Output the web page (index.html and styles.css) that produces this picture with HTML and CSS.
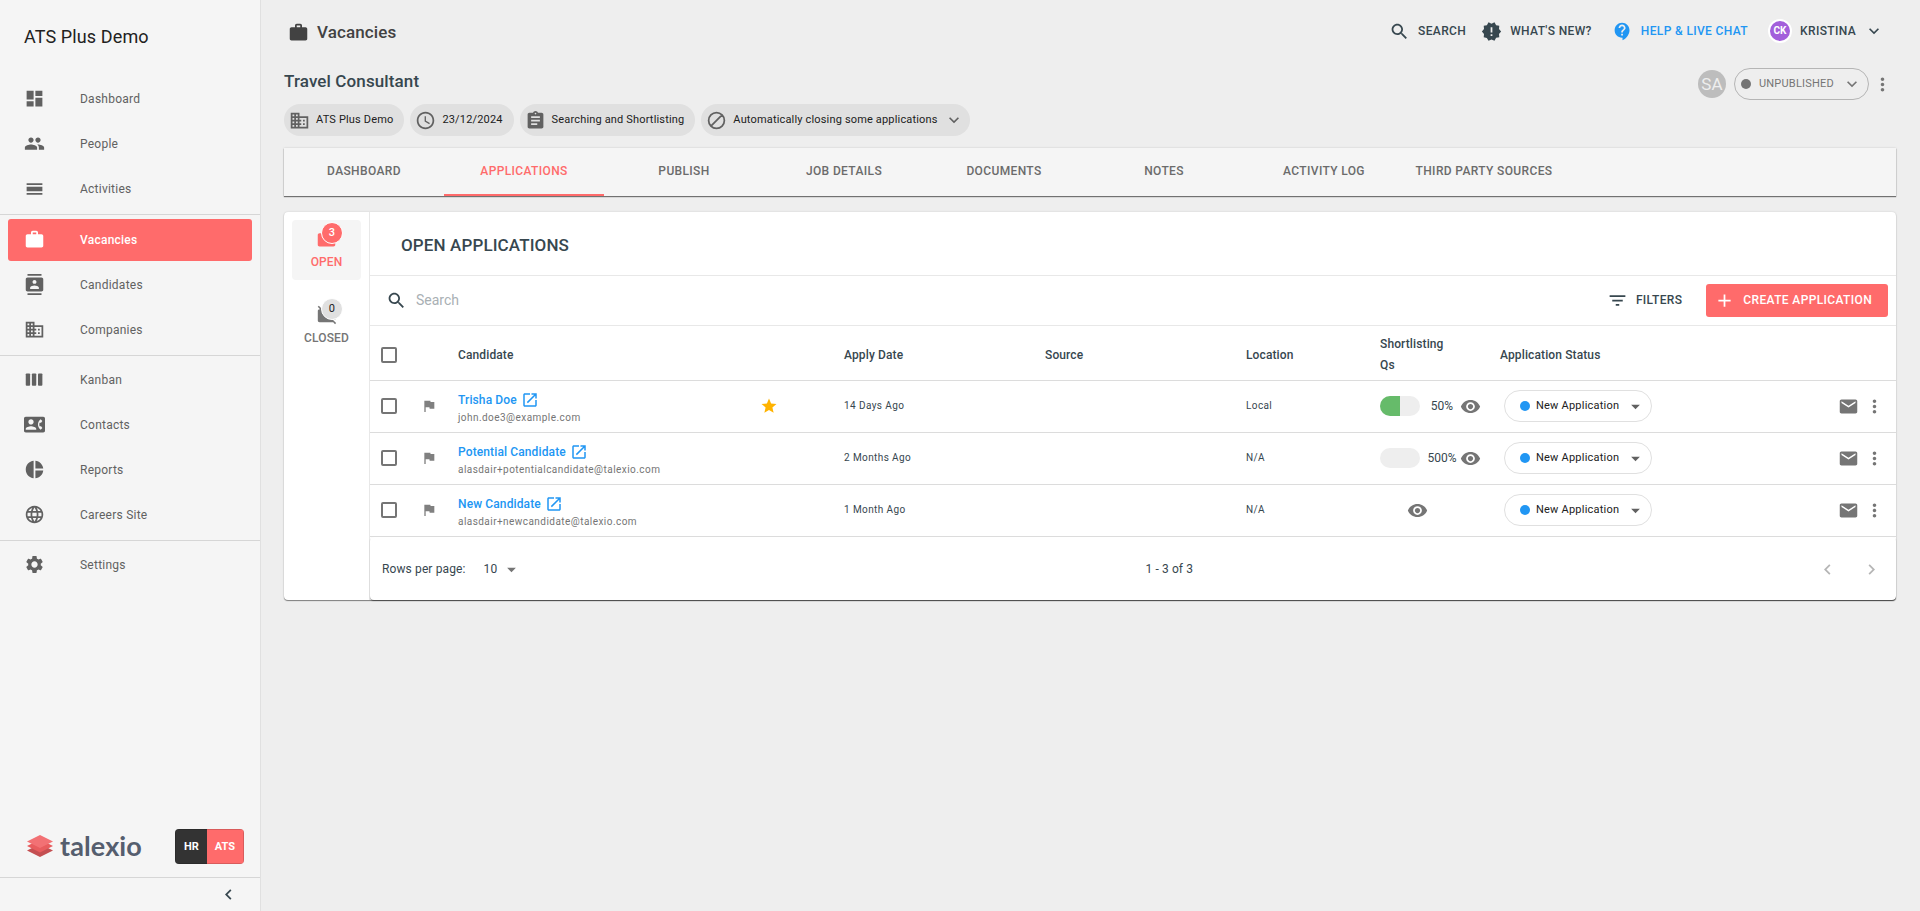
FILE: index.html
```html
<!DOCTYPE html>
<html lang="en">
<head>
<meta charset="utf-8">
<title>ATS Plus Demo</title>
<link rel="stylesheet" href="styles.css">
</head>
<body>
<svg class="sprite" aria-hidden="true">
  <symbol id="i-dashboard" viewBox="0 0 24 24"><path d="M3 13h8V3H3v10zm0 8h8v-6H3v6zm10 0h8V11h-8v10zm0-18v6h8V3h-8z"/></symbol>
  <symbol id="i-people" viewBox="0 0 24 24"><path d="M16 11c1.66 0 2.99-1.34 2.99-3S17.66 5 16 5c-1.66 0-3 1.34-3 3s1.34 3 3 3zm-8 0c1.66 0 2.99-1.34 2.99-3S9.66 5 8 5C6.34 5 5 6.34 5 8s1.34 3 3 3zm0 2c-2.33 0-7 1.17-7 3.5V19h14v-2.5c0-2.33-4.67-3.5-7-3.5zm8 0c-.29 0-.62.02-.97.05 1.16.84 1.97 1.97 1.97 3.45V19h6v-2.5c0-2.33-4.67-3.5-7-3.5z"/></symbol>
  <symbol id="i-day" viewBox="0 0 24 24"><path d="M3 17h18v2H3zm0-7h18v5H3zm0-4h18v2H3z"/></symbol>
  <symbol id="i-work" viewBox="0 0 24 24"><path d="M20 6h-4V4c0-1.11-.89-2-2-2h-4c-1.11 0-2 .89-2 2v2H4c-1.11 0-1.99.89-1.99 2L2 19c0 1.11.89 2 2 2h16c1.11 0 2-.89 2-2V8c0-1.11-.89-2-2-2zm-6 0h-4V4h4v2z"/></symbol>
  <symbol id="i-workoff" viewBox="0 0 24 24"><path d="M23 21.74l-1.46-1.46L7.21 5.95 3.25 1.99 1.99 3.25l2.7 2.7h-.64c-1.11 0-1.99.89-1.99 2l-.01 11c0 1.11.89 2 2 2h15.64L21.74 23 23 21.74zM22 7.95c.05-1.11-.84-2-1.95-1.95h-4V3.95c0-1.11-.89-2-2-1.95h-4c-1.11-.05-2 .84-2 1.95v.32l13.95 14V7.95zM14.05 6H10V3.95h4.05V6z"/></symbol>
  <symbol id="i-contacts" viewBox="0 0 24 24"><path d="M20 0H4v2h16V0zM4 24h16v-2H4v2zM20 4H4c-1.1 0-2 .9-2 2v12c0 1.1.9 2 2 2h16c1.1 0 2-.9 2-2V6c0-1.1-.9-2-2-2zm-8 2.75c1.24 0 2.25 1.01 2.25 2.25s-1.01 2.25-2.25 2.25S9.75 10.24 9.75 9 10.76 6.75 12 6.75zM17 17H7v-1.5c0-1.67 3.33-2.5 5-2.5s5 .83 5 2.5V17z"/></symbol>
  <symbol id="i-business" viewBox="0 0 24 24"><path d="M12 7V3H2v18h20V7H12zM6 19H4v-2h2v2zm0-4H4v-2h2v2zm0-4H4V9h2v2zm0-4H4V5h2v2zm4 12H8v-2h2v2zm0-4H8v-2h2v2zm0-4H8V9h2v2zm0-4H8V5h2v2zm10 12h-8v-2h2v-2h-2v-2h2v-2h-2V9h8v10zm-2-8h-2v2h2v-2zm0 4h-2v2h2v-2z"/></symbol>
  <symbol id="i-kanban" viewBox="0 0 24 24"><rect x="2" y="5" width="5" height="14" rx="1"/><rect x="9" y="5" width="5" height="14" rx="1"/><rect x="16" y="5" width="5" height="14" rx="1"/></symbol>
  <symbol id="i-phone" viewBox="0 0 24 24"><path d="M22 3H2C.9 3 0 3.9 0 5v14c0 1.1.9 2 2 2h20c1.1 0 1.99-.9 1.99-2L24 5c0-1.1-.9-2-2-2zM8 6c1.66 0 3 1.34 3 3s-1.34 3-3 3-3-1.34-3-3 1.34-3 3-3zm6 12H2v-1c0-2 4-3.1 6-3.1s6 1.1 6 3.1v1zm3.85-4h1.64L21 16l-1.99 1.99c-1.31-.98-2.28-2.38-2.73-3.99-.18-.64-.28-1.31-.28-2s.1-1.36.28-2c.45-1.62 1.42-3.01 2.73-3.99L21 8l-1.51 2h-1.64c-.22.63-.35 1.3-.35 2s.13 1.37.35 2z"/></symbol>
  <symbol id="i-pie" viewBox="0 0 24 24"><path d="M11 2v20c-5.07-.5-9-4.79-9-10s3.93-9.5 9-10zm2.03 0v8.99H22c-.47-4.74-4.24-8.52-8.97-8.99zm0 11.01V22c4.74-.47 8.5-4.25 8.97-8.99h-8.97z"/></symbol>
  <symbol id="i-globe" viewBox="0 0 24 24"><path d="M11.99 2C6.47 2 2 6.48 2 12s4.47 10 9.99 10C17.52 22 22 17.52 22 12S17.52 2 11.99 2zm6.93 6h-2.95c-.32-1.25-.78-2.45-1.38-3.56 1.84.63 3.37 1.91 4.33 3.56zM12 4.04c.83 1.2 1.48 2.53 1.91 3.96h-3.82c.43-1.43 1.08-2.76 1.91-3.96zM4.26 14C4.1 13.36 4 12.69 4 12s.1-1.36.26-2h3.38c-.08.66-.14 1.32-.14 2 0 .68.06 1.34.14 2H4.26zm.82 2h2.95c.32 1.25.78 2.45 1.38 3.56-1.84-.63-3.37-1.9-4.33-3.56zm2.95-8H5.08c.96-1.66 2.49-2.93 4.33-3.56C8.81 5.55 8.35 6.75 8.03 8zM12 19.96c-.83-1.2-1.48-2.53-1.91-3.96h3.82c-.43 1.43-1.08 2.76-1.91 3.96zM14.34 14H9.66c-.09-.66-.16-1.32-.16-2 0-.68.07-1.35.16-2h4.68c.09.65.16 1.32.16 2 0 .68-.07 1.34-.16 2zm.25 5.56c.6-1.11 1.06-2.31 1.38-3.56h2.95c-.96 1.65-2.49 2.93-4.33 3.56zM16.36 14c.08-.66.14-1.32.14-2 0-.68-.06-1.34-.14-2h3.38c.16.64.26 1.31.26 2s-.1 1.36-.26 2h-3.38z"/></symbol>
  <symbol id="i-settings" viewBox="0 0 24 24"><path d="M19.14 12.94c.04-.3.06-.61.06-.94 0-.32-.02-.64-.07-.94l2.03-1.58c.18-.14.23-.41.12-.61l-1.92-3.32c-.12-.22-.37-.29-.59-.22l-2.39.96c-.5-.38-1.03-.7-1.62-.94l-.36-2.54c-.04-.24-.24-.41-.48-.41h-3.84c-.24 0-.43.17-.47.41l-.36 2.54c-.59.24-1.13.57-1.62.94l-2.39-.96c-.22-.08-.47 0-.59.22L2.74 8.87c-.12.21-.08.47.12.61l2.03 1.58c-.05.3-.09.63-.09.94s.02.64.07.94l-2.03 1.58c-.18.14-.23.41-.12.61l1.92 3.32c.12.22.37.29.59.22l2.39-.96c.5.38 1.03.7 1.62.94l.36 2.54c.05.24.24.41.48.41h3.84c.24 0 .44-.17.47-.41l.36-2.54c.59-.24 1.13-.56 1.62-.94l2.39.96c.22.08.47 0 .59-.22l1.92-3.32c.12-.22.07-.47-.12-.61l-2.01-1.58zM12 15.6c-1.98 0-3.6-1.62-3.6-3.6s1.62-3.6 3.6-3.6 3.6 1.62 3.6 3.6-1.62 3.6-3.6 3.6z"/></symbol>
  <symbol id="i-search" viewBox="0 0 24 24"><path d="M15.5 14h-.79l-.28-.27C15.41 12.59 16 11.11 16 9.5 16 5.91 13.09 3 9.5 3S3 5.91 3 9.5 5.91 16 9.5 16c1.61 0 3.09-.59 4.23-1.57l.27.28v.79l5 4.99L20.49 19l-4.99-5zm-6 0C7.01 14 5 11.99 5 9.5S7.01 5 9.5 5 14 7.01 14 9.5 11.99 14 9.5 14z"/></symbol>
  <symbol id="i-new" viewBox="0 0 24 24"><path d="M23 12l-2.44-2.78.34-3.68-3.61-.82-1.89-3.18L12 3 8.6 1.54 6.71 4.72l-3.61.81.34 3.68L1 12l2.44 2.78-.34 3.69 3.61.82 1.89 3.18L12 21l3.4 1.46 1.89-3.18 3.61-.82-.34-3.68L23 12zm-10 5h-2v-2h2v2zm0-4h-2V7h2v6z"/></symbol>
  <symbol id="i-help" viewBox="0 0 24 24"><path d="M11.5 2C6.81 2 3 5.81 3 10.5S6.81 19 11.5 19h.5v3c4.86-2.34 8-7 8-11.5C20 5.81 16.19 2 11.5 2zm1 14.5h-2v-2h2v2zm0-3.5h-2c0-3.25 3-3 3-5 0-1.1-.9-2-2-2s-2 .9-2 2h-2c0-2.21 1.79-4 4-4s4 1.79 4 4c0 2.5-3 2.75-3 5z"/></symbol>
  <symbol id="i-down" viewBox="0 0 24 24"><path d="M16.59 8.59L12 13.17 7.41 8.59 6 10l6 6 6-6z"/></symbol>
  <symbol id="i-left" viewBox="0 0 24 24"><path d="M15.41 7.41L14 6l-6 6 6 6 1.41-1.41L10.83 12z"/></symbol>
  <symbol id="i-right" viewBox="0 0 24 24"><path d="M10 6L8.59 7.41 13.17 12l-4.58 4.59L10 18l6-6z"/></symbol>
  <symbol id="i-more" viewBox="0 0 24 24"><path d="M12 8c1.1 0 2-.9 2-2s-.9-2-2-2-2 .9-2 2 .9 2 2 2zm0 2c-1.1 0-2 .9-2 2s.9 2 2 2 2-.9 2-2-.9-2-2-2zm0 6c-1.1 0-2 .9-2 2s.9 2 2 2 2-.9 2-2-.9-2-2-2z"/></symbol>
  <symbol id="i-clock" viewBox="0 0 24 24"><path d="M11.99 2C6.47 2 2 6.48 2 12s4.47 10 9.99 10C17.52 22 22 17.52 22 12S17.52 2 11.99 2zM12 20c-4.42 0-8-3.58-8-8s3.58-8 8-8 8 3.58 8 8-3.58 8-8 8zm.5-13H11v6l5.25 3.15.75-1.23-4.5-2.67z"/></symbol>
  <symbol id="i-assignment" viewBox="0 0 24 24"><path d="M19 3h-4.18C14.4 1.84 13.3 1 12 1c-1.3 0-2.4.84-2.82 2H5c-1.1 0-2 .9-2 2v14c0 1.1.9 2 2 2h14c1.1 0 2-.9 2-2V5c0-1.1-.9-2-2-2zm-7 0c.55 0 1 .45 1 1s-.45 1-1 1-1-.45-1-1 .45-1 1-1zm2 14H7v-2h7v2zm3-4H7v-2h10v2zm0-4H7V7h10v2z"/></symbol>
  <symbol id="i-block" viewBox="0 0 24 24"><path d="M5.6 18.4L18.4 5.6M21 12a9 9 0 1 1-18 0 9 9 0 0 1 18 0z" fill="none" stroke="currentColor" stroke-width="2"/></symbol>
  <symbol id="i-flag" viewBox="0 0 24 24"><path d="M14.4 6L14 4H5v17h2v-7h5.6l.4 2h7V6z"/></symbol>
  <symbol id="i-open" viewBox="0 0 24 24"><path d="M19 19H5V5h7V3H5c-1.11 0-2 .9-2 2v14c0 1.1.89 2 2 2h14c1.1 0 2-.9 2-2v-7h-2v7zM14 3v2h3.59l-9.83 9.83 1.41 1.41L19 6.41V10h2V3h-7z"/></symbol>
  <symbol id="i-star" viewBox="0 0 24 24"><path d="M12 17.27L18.18 21l-1.64-7.03L22 9.24l-7.19-.61L12 2 9.19 8.63 2 9.24l5.46 4.73L5.82 21z"/></symbol>
  <symbol id="i-eye" viewBox="0 0 24 24"><path d="M12 4.5C7 4.5 2.73 7.61 1 12c1.73 4.39 6 7.5 11 7.5s9.27-3.11 11-7.5c-1.73-4.39-6-7.5-11-7.5zM12 17c-2.76 0-5-2.24-5-5s2.24-5 5-5 5 2.24 5 5-2.24 5-5 5zm0-8c-1.66 0-3 1.34-3 3s1.34 3 3 3 3-1.34 3-3-1.34-3-3-3z"/></symbol>
  <symbol id="i-mail" viewBox="0 0 24 24"><path d="M20 4H4c-1.1 0-1.99.9-1.99 2L2 18c0 1.1.9 2 2 2h16c1.1 0 2-.9 2-2V6c0-1.1-.9-2-2-2zm0 4l-8 5-8-5V6l8 5 8-5v2z"/></symbol>
  <symbol id="i-filter" viewBox="0 0 24 24"><path d="M10 18h4v-2h-4v2zM3 6v2h18V6H3zm3 7h12v-2H6v2z"/></symbol>
  <symbol id="i-add" viewBox="0 0 24 24"><path d="M19 13h-6v6h-2v-6H5v-2h6V5h2v6h6v2z"/></symbol>
  <symbol id="i-caret" viewBox="0 0 24 24"><path d="M7 10l5 5 5-5z"/></symbol>
</svg>

<div class="app">
  <aside class="sidebar">
    <div class="brand">ATS Plus Demo</div>
    <nav class="nav" aria-label="Main">
      <a class="nav-item" href="#"><svg class="icon"><use href="#i-dashboard"/></svg>Dashboard</a>
      <a class="nav-item" href="#"><svg class="icon"><use href="#i-people"/></svg>People</a>
      <a class="nav-item" href="#"><svg class="icon"><use href="#i-day"/></svg>Activities</a>
      <hr class="nav-rule">
      <a class="nav-item active" href="#"><svg class="icon"><use href="#i-work"/></svg>Vacancies</a>
      <a class="nav-item" href="#"><svg class="icon"><use href="#i-contacts"/></svg>Candidates</a>
      <a class="nav-item" href="#"><svg class="icon"><use href="#i-business"/></svg>Companies</a>
      <hr class="nav-rule">
      <a class="nav-item" href="#"><svg class="icon"><use href="#i-kanban"/></svg>Kanban</a>
      <a class="nav-item" href="#"><svg class="icon"><use href="#i-phone"/></svg>Contacts</a>
      <a class="nav-item" href="#"><svg class="icon"><use href="#i-pie"/></svg>Reports</a>
      <a class="nav-item" href="#"><svg class="icon"><use href="#i-globe"/></svg>Careers Site</a>
      <hr class="nav-rule">
      <a class="nav-item" href="#"><svg class="icon"><use href="#i-settings"/></svg>Settings</a>
    </nav>
    <div class="product">
      <div class="logo">
        <svg class="logo-mark" viewBox="0 0 26 22"><path d="M0 15.500l13-6.500 13 6.500L13 22z" fill="#c44f51"/><path d="M0 11l13-6.500L26 11l-13 6.500z" fill="#e85c5e"/><path d="M0 6.500L13 0l13 6.500L13 13z" fill="#f27174"/></svg>
        <span class="logo-text">talexio</span>
      </div>
      <div class="switch">
        <button class="switch-btn dark" type="button">HR</button><button class="switch-btn red" type="button">ATS</button>
      </div>
    </div>
    <div class="collapse"><button class="icon-btn ink" type="button" aria-label="Collapse menu"><svg class="icon"><use href="#i-left"/></svg></button></div>
  </aside>

  <main class="main">
    <header class="topbar">
      <h1 class="page-name"><svg class="icon"><use href="#i-work"/></svg>Vacancies</h1>
      <div class="top-actions">
        <div class="top-group">
          <button class="top-btn" type="button"><svg class="icon"><use href="#i-search"/></svg>SEARCH</button>
          <button class="top-btn" type="button"><svg class="icon"><use href="#i-new"/></svg>WHAT'S NEW?</button>
        </div>
        <button class="top-btn help" type="button"><svg class="icon"><use href="#i-help"/></svg>HELP &amp; LIVE CHAT</button>
        <button class="top-btn" type="button"><span class="avatar">CK</span>KRISTINA<svg class="icon small"><use href="#i-down"/></svg></button>
      </div>
    </header>

    <section class="vacancy">
      <div class="vacancy-info">
        <h2 class="vacancy-title">Travel Consultant</h2>
        <div class="chips">
          <span class="chip"><svg class="icon"><use href="#i-business"/></svg>ATS Plus Demo</span>
          <span class="chip"><svg class="icon"><use href="#i-clock"/></svg>23/12/2024</span>
          <span class="chip"><svg class="icon"><use href="#i-assignment"/></svg>Searching and Shortlisting</span>
          <button class="chip menu" type="button"><svg class="icon"><use href="#i-block"/></svg>Automatically closing some applications<svg class="icon small"><use href="#i-down"/></svg></button>
        </div>
      </div>
      <div class="vacancy-actions">
        <span class="owner">SA</span>
        <button class="publish" type="button"><span class="dot"></span>UNPUBLISHED<svg class="icon small"><use href="#i-down"/></svg></button>
        <button class="icon-btn" type="button" aria-label="More"><svg class="icon"><use href="#i-more"/></svg></button>
      </div>
    </section>

    <nav class="tabs" aria-label="Vacancy">
      <a class="tab" href="#">DASHBOARD</a>
      <a class="tab active" href="#">APPLICATIONS</a>
      <a class="tab" href="#">PUBLISH</a>
      <a class="tab" href="#">JOB DETAILS</a>
      <a class="tab" href="#">DOCUMENTS</a>
      <a class="tab" href="#">NOTES</a>
      <a class="tab" href="#">ACTIVITY LOG</a>
      <a class="tab" href="#">THIRD PARTY SOURCES</a>
    </nav>

    <section class="card">
      <div class="side-tabs">
        <button class="side-tab active" type="button"><span class="badged"><svg class="icon"><use href="#i-work"/></svg><span class="badge">3</span></span>OPEN</button>
        <button class="side-tab" type="button"><span class="badged"><svg class="icon"><use href="#i-workoff"/></svg><span class="badge">0</span></span>CLOSED</button>
      </div>
      <div class="panel">
        <h3 class="panel-title">OPEN APPLICATIONS</h3>
        <div class="toolbar">
          <label class="search"><svg class="icon"><use href="#i-search"/></svg><input class="search-input" type="search" placeholder="Search" aria-label="Search"></label>
          <button class="filters" type="button"><svg class="icon"><use href="#i-filter"/></svg>FILTERS</button>
          <button class="create" type="button"><svg class="icon"><use href="#i-add"/></svg>CREATE APPLICATION</button>
        </div>
        <table class="grid">
          <colgroup><col class="c-check"><col class="c-flag"><col><col class="c-star"><col class="c-wide"><col class="c-wide"><col class="c-loc"><col class="c-short"><col class="c-status"><col class="c-act"></colgroup>
          <thead>
            <tr>
              <th><input class="check" type="checkbox" aria-label="Select all"></th><th></th><th>Candidate</th><th></th><th>Apply Date</th><th>Source</th><th>Location</th><th><span class="two-line">Shortlisting Qs</span></th><th>Application Status</th><th></th>
            </tr>
          </thead>
          <tbody>
            <tr>
              <td><input class="check" type="checkbox" aria-label="Select Trisha Doe"></td>
              <td><svg class="icon flag"><use href="#i-flag"/></svg></td>
              <td class="who"><a class="name" href="#">Trisha Doe<svg class="icon"><use href="#i-open"/></svg></a><div class="email">john.doe3@example.com</div></td>
              <td><svg class="icon star"><use href="#i-star"/></svg></td>
              <td class="fine">14 Days Ago</td><td></td><td class="fine">Local</td>
              <td><div class="score"><span class="bar"><span class="fill" style="width:50%"></span></span><span class="pct">50%</span><button class="icon-btn" type="button" aria-label="View answers"><svg class="icon"><use href="#i-eye"/></svg></button></div></td>
              <td><label class="status"><span class="dot"></span><select class="status-select" aria-label="Status"><option>New Application</option></select><svg class="icon"><use href="#i-caret"/></svg></label></td>
              <td><div class="row-actions"><button class="icon-btn" type="button" aria-label="Email"><svg class="icon"><use href="#i-mail"/></svg></button><button class="icon-btn" type="button" aria-label="More"><svg class="icon"><use href="#i-more"/></svg></button></div></td>
            </tr>
            <tr>
              <td><input class="check" type="checkbox" aria-label="Select Potential Candidate"></td>
              <td><svg class="icon flag"><use href="#i-flag"/></svg></td>
              <td class="who"><a class="name" href="#">Potential Candidate<svg class="icon"><use href="#i-open"/></svg></a><div class="email">alasdair+potentialcandidate@talexio.com</div></td>
              <td></td>
              <td class="fine">2 Months Ago</td><td></td><td class="fine">N/A</td>
              <td><div class="score"><span class="bar"></span><span class="pct">500%</span><button class="icon-btn" type="button" aria-label="View answers"><svg class="icon"><use href="#i-eye"/></svg></button></div></td>
              <td><label class="status"><span class="dot"></span><select class="status-select" aria-label="Status"><option>New Application</option></select><svg class="icon"><use href="#i-caret"/></svg></label></td>
              <td><div class="row-actions"><button class="icon-btn" type="button" aria-label="Email"><svg class="icon"><use href="#i-mail"/></svg></button><button class="icon-btn" type="button" aria-label="More"><svg class="icon"><use href="#i-more"/></svg></button></div></td>
            </tr>
            <tr>
              <td><input class="check" type="checkbox" aria-label="Select New Candidate"></td>
              <td><svg class="icon flag"><use href="#i-flag"/></svg></td>
              <td class="who"><a class="name" href="#">New Candidate<svg class="icon"><use href="#i-open"/></svg></a><div class="email">alasdair+newcandidate@talexio.com</div></td>
              <td></td>
              <td class="fine">1 Month Ago</td><td></td><td class="fine">N/A</td>
              <td><div class="score lone"><button class="icon-btn" type="button" aria-label="View answers"><svg class="icon"><use href="#i-eye"/></svg></button></div></td>
              <td><label class="status"><span class="dot"></span><select class="status-select" aria-label="Status"><option>New Application</option></select><svg class="icon"><use href="#i-caret"/></svg></label></td>
              <td><div class="row-actions"><button class="icon-btn" type="button" aria-label="Email"><svg class="icon"><use href="#i-mail"/></svg></button><button class="icon-btn" type="button" aria-label="More"><svg class="icon"><use href="#i-more"/></svg></button></div></td>
            </tr>
          </tbody>
        </table>
        <footer class="pager">
          <label class="per-page">Rows per page:<span class="per-page-pick"><select class="per-page-select"><option>10</option></select><svg class="icon"><use href="#i-caret"/></svg></span></label>
          <span class="range">1 - 3 of 3</span>
          <div class="pager-nav">
            <button class="icon-btn" type="button" aria-label="Previous page" disabled><svg class="icon"><use href="#i-left"/></svg></button>
            <button class="icon-btn" type="button" aria-label="Next page" disabled><svg class="icon"><use href="#i-right"/></svg></button>
          </div>
        </footer>
      </div>
    </section>
  </main>
</div>
</body>
</html>
```
FILE: styles.css
```css
:root {
  --red: #ff6b6b;
  --ink: #37474f;
  --grey: #757575;
  --blue: #2196f3;
}
*, *::before, *::after { box-sizing: border-box; }
body {
  margin: 0;
  background: #eee;
  color: var(--ink);
  font-family: Roboto, "Liberation Sans", sans-serif;
  font-size: 12px;
  line-height: 20px;
  letter-spacing: 0.01em;
}
h1, h2, h3 { margin: 0; font-weight: 500; }
a { color: inherit; text-decoration: none; }
button, select, input { font: inherit; letter-spacing: inherit; color: inherit; }
button { padding: 0; border: 0; background: none; cursor: pointer; }
select { appearance: none; padding: 0; border: 0; background: none; }
.sprite { display: none; }
.icon { flex: none; display: block; width: 21px; height: 21px; fill: currentColor; }
.small { width: 20px; height: 20px; }
.icon-btn { display: flex; align-items: center; justify-content: center; color: var(--grey); }
.icon-btn.ink { color: var(--ink); }

.app { display: flex; min-height: 100vh; }

/* Sidebar */
.sidebar {
  flex: none;
  display: flex;
  flex-direction: column;
  width: 261px;
  border-right: 1px solid #e0e0e0;
  background: #f5f5f5;
}
.brand { padding: 24px 24px 27px; font-size: 18px; line-height: 25px; color: #212121; }
.nav { flex: 1; }
.nav-item {
  display: flex;
  align-items: center;
  gap: 35px;
  height: 45px;
  padding-left: 24px;
  color: #616161;
  letter-spacing: 0.02em;
}
.nav-item.active {
  height: 42px;
  margin: 4px 8px 1px;
  padding: 0 0 1px 16px;
  border-radius: 3px;
  background: var(--red);
  color: #fff;
  font-weight: 500;
}
.nav-rule { height: 1px; margin: 3px 0 1px; border: 0; background: #d6d6d6; }
.product { display: flex; align-items: center; justify-content: space-between; padding: 0 16px 13px 27px; }
.logo { display: flex; align-items: center; gap: 7px; padding-bottom: 2px; }
.logo-mark { width: 26px; height: 22px; }
.logo-text { font: 700 27px/30px Lato, sans-serif; color: #555e6e; }
.switch { display: flex; height: 35px; overflow: hidden; border-radius: 4px; }
.switch-btn { padding: 0 8px; border: 1px solid rgba(0, 0, 0, 0.15); color: #fff; font-size: 11px; font-weight: 700; letter-spacing: 0; }
.switch-btn.dark { background: #333; border-right: 0; }
.switch-btn.red { background: var(--red); border-left: 0; }
.collapse { display: flex; justify-content: flex-end; height: 34px; padding-right: 21px; border-top: 1px solid #d6d6d6; }

/* Top bar */
.main { flex: 1; min-width: 0; padding: 0 24px 0 23px; }
.topbar { display: flex; align-items: center; justify-content: space-between; height: 64px; padding: 0 12px 0 4px; }
.page-name { display: flex; align-items: center; gap: 8px; font-size: 17px; color: #424242; }
.top-actions { display: flex; align-items: center; gap: 20px; padding-bottom: 2px; }
.top-group { display: flex; align-items: center; gap: 15px; }
.top-btn { display: flex; align-items: center; gap: 8px; font-weight: 500; letter-spacing: 0.03em; }
.top-btn.help { color: var(--blue); }
.avatar {
  width: 24px;
  height: 24px;
  border: 2px solid #fff;
  border-radius: 50%;
  background: #a35fdb;
  color: #fff;
  font-size: 10px;
  font-weight: 700;
  line-height: 20px;
  letter-spacing: 0;
  text-align: center;
}

/* Vacancy heading */
.vacancy { display: flex; justify-content: space-between; }
.vacancy-title { padding-top: 4px; font-size: 17px; line-height: 26px; }
.chips { display: flex; flex-wrap: wrap; gap: 6px; padding: 10px 0 12px; }
.chip {
  display: flex;
  align-items: center;
  gap: 6px;
  height: 32px;
  padding: 0 11px 0 5px;
  border-radius: 16px;
  background: #e0e0e0;
  color: #212121;
  font-size: 11px;
  letter-spacing: 0.015em;
}
.chip.menu { padding-right: 6px; }
.chip .icon { color: #616161; }
.vacancy-actions { display: flex; align-items: center; gap: 3px; height: 40px; padding-right: 3px; }
.owner {
  width: 28px;
  height: 28px;
  margin-right: 5px;
  border-radius: 50%;
  background: #bdbdbd;
  color: #eee;
  font-size: 17px;
  line-height: 28px;
  letter-spacing: 0;
  text-align: center;
}
.publish {
  display: flex;
  align-items: center;
  gap: 8px;
  height: 32px;
  padding: 0 6px;
  border: 1px solid #b5b5b5;
  border-radius: 16px;
  color: var(--grey);
  font-size: 11px;
  letter-spacing: 0.02em;
}
.dot { flex: none; width: 10px; height: 10px; border-radius: 50%; background: currentColor; }

/* Tabs */
.tabs {
  display: flex;
  height: 48px;
  background: #f5f5f5;
  box-shadow: 0 1px 1px rgba(0, 0, 0, 0.5), 0 0 2px rgba(0, 0, 0, 0.15);
}
.tab {
  flex: 0 1 160px;
  padding-top: 13px;
  border-bottom: 2px solid transparent;
  color: #6b6b6b;
  font-weight: 500;
  letter-spacing: 0.03em;
  text-align: center;
  white-space: nowrap;
}
.tab.active { border-color: var(--red); color: var(--red); }

/* Applications card */
.card {
  display: flex;
  margin-top: 16px;
  border-radius: 4px;
  background: #fff;
  box-shadow: 0 1px 1px rgba(0, 0, 0, 0.45), 0 0 2px rgba(0, 0, 0, 0.15);
}
.side-tabs { flex: none; display: flex; flex-direction: column; gap: 16px; width: 85px; padding: 8px; }
.side-tab {
  display: flex;
  flex-direction: column;
  align-items: center;
  gap: 3px;
  height: 60px;
  padding-top: 8px;
  border-radius: 4px;
  color: var(--grey);
  font-weight: 500;
}
.side-tab.active { background: #f5f5f5; color: var(--red); }
.badged { position: relative; }
.badge {
  position: absolute;
  top: -6px;
  left: 5px;
  width: 22px;
  height: 22px;
  border: 1px solid #fff;
  border-radius: 50%;
  background: #e0e0e0;
  color: #212121;
  font-size: 11px;
  font-weight: 400;
  line-height: 20px;
}
.active .badge { background: var(--red); color: #fff; font-weight: 500; }
.panel { flex: 1; min-width: 0; border-left: 1px solid #e8e8e8; }
.panel-title { padding: 20px 31px 17px; font-size: 17px; line-height: 26px; }
.toolbar {
  display: flex;
  align-items: center;
  height: 51px;
  padding: 0 8px 1px 16px;
  border-top: 1px solid #e8e8e8;
  border-bottom: 1px solid #e8e8e8;
}
.search { flex: 1; display: flex; align-items: center; gap: 9px; }
.search-input { flex: 1; padding: 0; border: 0; outline: 0; background: none; font-size: 14px; letter-spacing: 0; }
.search-input::placeholder { color: #a9b0b4; }
.filters { display: flex; align-items: center; gap: 8px; margin-right: 24px; font-weight: 500; letter-spacing: 0.03em; }
.create {
  display: flex;
  align-items: center;
  gap: 8px;
  height: 33px;
  padding: 0 16px 0 8px;
  border-radius: 3px;
  background: var(--red);
  color: #fff;
  font-weight: 500;
  letter-spacing: 0.03em;
}

.grid { width: 100%; border-collapse: collapse; table-layout: fixed; }
.c-check { width: 44px; }
.c-flag { width: 44px; }
.c-star { width: 86px; }
.c-wide { width: 201px; }
.c-loc { width: 134px; }
.c-short { width: 120px; }
.c-status { width: 200px; }
.c-act { width: 196px; }
.grid th, .grid td { padding: 0; border-bottom: 1px solid #dcdcdc; text-align: left; }
.grid th { height: 54px; padding-top: 4px; font-weight: 500; }
.grid td { height: 52px; }
.grid th:first-child, .grid td:first-child { padding-left: 11px; }
.two-line { display: block; width: 72px; line-height: 21px; }
.check {
  appearance: none;
  display: block;
  width: 16px;
  height: 16px;
  margin: 0;
  border: 2px solid var(--grey);
  border-radius: 2px;
}
.check:checked { background: var(--grey); }
.flag { width: 16px; height: 16px; margin-left: 7px; color: #808080; }
.star { width: 18px; height: 18px; margin-left: 2px; color: #ffb300; }
.grid .who { padding-top: 3px; }
.name { display: flex; align-items: center; gap: 4px; color: var(--blue); font-weight: 500; }
.name .icon { width: 18px; height: 18px; }
.email { color: var(--grey); font-size: 10px; line-height: 16px; letter-spacing: 0.045em; }
.fine { font-size: 10px; letter-spacing: 0.04em; }
.score { display: flex; align-items: center; }
.bar { width: 40px; height: 20px; overflow: hidden; border-radius: 10px; background: #eee; }
.fill { display: block; height: 100%; background: #66bb6a; }
.pct { width: 40px; padding-left: 4px; letter-spacing: 0; text-align: center; }
.score.lone { padding-left: 27px; }
.status {
  display: inline-flex;
  align-items: center;
  height: 32px;
  margin-left: 4px;
  padding: 0 5px 0 15px;
  border: 1px solid #e0e0e0;
  border-radius: 16px;
  vertical-align: middle;
}
.status .dot { background: var(--blue); }
.status .icon { color: #616161; }
.status-select { margin: 0 5px 0 6px; color: #212121; font-size: 11px; letter-spacing: 0.02em; }
.row-actions { display: flex; justify-content: flex-end; gap: 5px; padding-right: 11px; }

.pager {
  display: flex;
  align-items: center;
  justify-content: space-between;
  height: 63px;
  padding: 2px 14px 0 12px;
  border-radius: 4px;
  box-shadow: 0 1px 1px rgba(0, 0, 0, 0.45);
}
.per-page { display: flex; align-items: center; gap: 18px; }
.per-page-pick { display: flex; align-items: center; gap: 3px; }
.per-page-pick .icon { color: var(--grey); }
.pager-nav { display: flex; justify-content: flex-end; gap: 23px; }
.pager-nav .icon-btn { color: #b5b5b5; }
```
